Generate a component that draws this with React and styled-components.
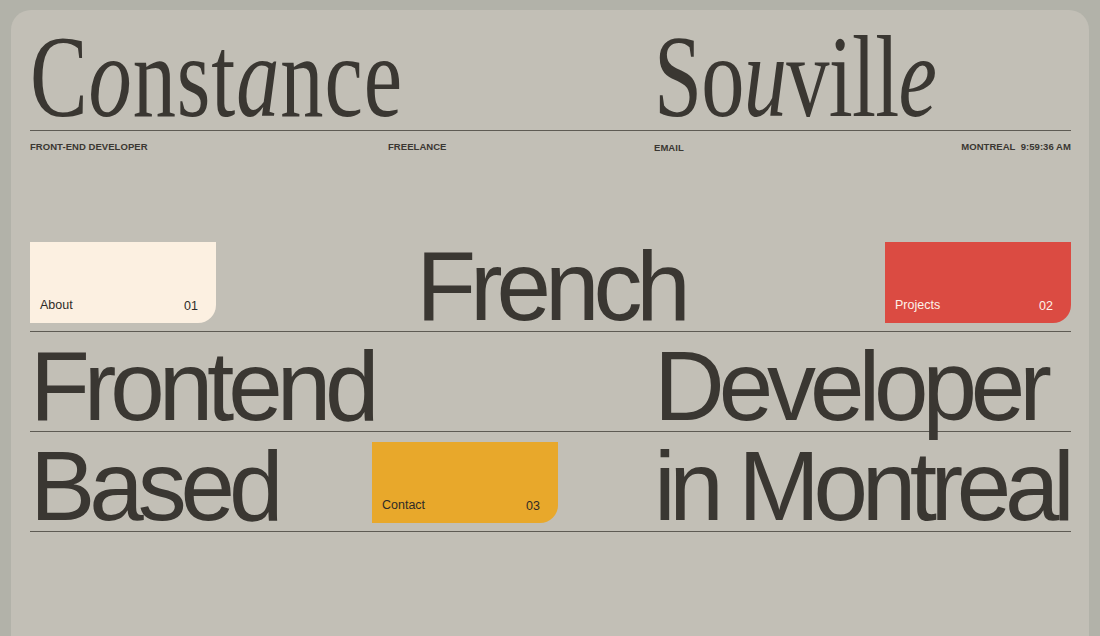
import React from "react";
import styled, { createGlobalStyle } from "styled-components";

const ink = "#3a3732";
const rule = "#5e5b54";

const Global = createGlobalStyle`
  html, body { height: 100%; }
  body {
    margin: 0;
    background: #b2b2a9;
    font-family: "Liberation Sans", Arial, sans-serif;
    color: ${ink};
    overflow: hidden;
  }
  #root { height: 100%; }
`;

const Panel = styled.div`
  box-sizing: border-box;
  margin: 10px 11px 0;
  height: calc(100% - 10px);
  background: #c2bfb6;
  border-radius: 20px 20px 0 0;
  padding: 14px 18px 0 19px;
  overflow: hidden;
`;

const NameRow = styled.header`
  display: grid;
  grid-template-columns: 624px 1fr;
  border-bottom: 1px solid ${rule};
  height: 106px;
`;

const Name = styled.h1`
  margin: 0;
  font-family: "Liberation Serif", "Times New Roman", serif;
  font-weight: 400;
  font-size: 116px;
  line-height: 106px;
  letter-spacing: ${(p) => p.$track};
  white-space: nowrap;
  transform: scaleX(0.745);
  transform-origin: left center;
  color: ${ink};
  i { font-style: italic; }
`;

const InfoRow = styled.div`
  display: grid;
  grid-template-columns: 358px 266px 1fr auto;
  padding-top: 10px;
  font-size: 9.5px;
  font-weight: 700;
  line-height: 12px;
  letter-spacing: 0.05px;
  text-transform: uppercase;
`;

const Info = styled.span`
  white-space: pre;
  margin-top: ${(p) => (p.$drop ? "1px" : "0")};
`;

const Main = styled.main`
  margin-top: 78px;
`;

const Row = styled.section`
  box-sizing: border-box;
  height: 100px;
  display: grid;
  grid-template-columns: ${(p) => p.$cols};
  align-items: end;
  padding: 10px 0 8px;
  border-bottom: 1px solid ${rule};
`;

const Big = styled.span`
  font-size: 98px;
  line-height: 0.74;
  letter-spacing: ${(p) => p.$track || "-6.1px"};
  white-space: nowrap;
  color: ${ink};
  justify-self: ${(p) => p.$justify || "start"};
`;

const Card = styled.a`
  box-sizing: border-box;
  width: 186px;
  height: 81px;
  display: flex;
  justify-content: space-between;
  align-items: flex-end;
  padding: 0 18px 10px 10px;
  background: ${(p) => p.$bg};
  color: ${(p) => p.$fg};
  border-bottom-right-radius: 18px;
  text-decoration: none;
  font-size: 12.5px;
  line-height: 15px;
  justify-self: ${(p) => p.$justify || "start"};
`;

const CardNum = styled.span`
  font-size: 12.5px;
  margin-bottom: -1px;
`;

export default function App() {
  return (
    <>
      <Global />
      <Panel>
        <NameRow>
          <Name $track="1.2px">
            C<i>o</i>nst<i>a</i>nce
          </Name>
          <Name $track="-1px">
            So<i>u</i>vill<i>e</i>
          </Name>
        </NameRow>
        <InfoRow>
          <Info>Front-end developer</Info>
          <Info>Freelance</Info>
          <Info $drop>Email</Info>
          <Info>{"Montreal  9:59:36 AM"}</Info>
        </InfoRow>
        <Main>
          <Row $cols="186px 1fr 186px">
            <Card href="#" $bg="#fcf0e1" $fg="#2e2b27">
              <span>About</span>
              <CardNum>01</CardNum>
            </Card>
            <Big $justify="center">French</Big>
            <Card href="#" $bg="#db4b42" $fg="#fdf3ea">
              <span>Projects</span>
              <CardNum>02</CardNum>
            </Card>
          </Row>
          <Row $cols="624px 1fr">
            <Big>Frontend</Big>
            <Big>Developer</Big>
          </Row>
          <Row $cols="342px 282px 1fr">
            <Big>Based</Big>
            <Card href="#" $bg="#e8a82b" $fg="#2e2b27">
              <span>Contact</span>
              <CardNum>03</CardNum>
            </Card>
            <Big $track="-6.4px">in Montreal</Big>
          </Row>
        </Main>
      </Panel>
    </>
  );
}
